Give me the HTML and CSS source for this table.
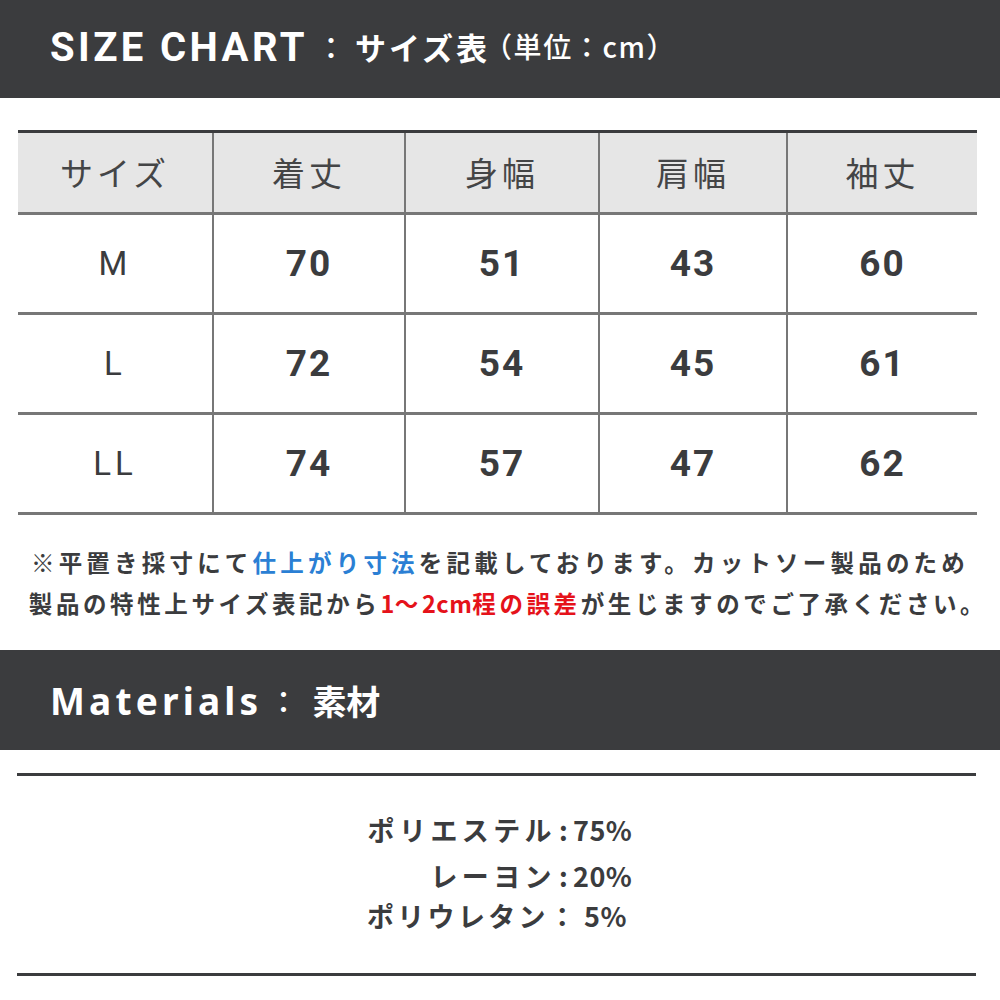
FILE: index.html
```html
<!DOCTYPE html>
<html lang="ja">
<head>
<meta charset="utf-8">
<title>SIZE CHART</title>
<link rel="stylesheet" href="styles.css">
</head>
<body>
<header class="bar bar-size">
  <h1 class="bar-title"><span class="en en-size">SIZE CHART</span><span class="colon">：</span><span class="jp">サイズ表</span><span class="unit">（単位：cm）</span></h1>
</header>

<section class="chart">
  <table class="size-table">
    <colgroup>
      <col class="c1"><col class="c2"><col class="c3"><col class="c4"><col class="c5">
    </colgroup>
    <thead>
      <tr><th>サイズ</th><th>着丈</th><th>身幅</th><th>肩幅</th><th>袖丈</th></tr>
    </thead>
    <tbody>
      <tr><td class="size">M</td><td>70</td><td>51</td><td>43</td><td>60</td></tr>
      <tr><td class="size">L</td><td>72</td><td>54</td><td>45</td><td>61</td></tr>
      <tr><td class="size">LL</td><td>74</td><td>57</td><td>47</td><td>62</td></tr>
    </tbody>
  </table>
  <div class="note">
    <p>※平置き採寸にて<span class="blue">仕上がり寸法</span>を記載しております。カットソー製品のため</p>
    <p class="l2">製品の特性上サイズ表記から<span class="red"><span class="half">1</span>〜<span class="half">2cm</span>程の誤差</span>が生じますのでご了承ください。</p>
  </div>
</section>

<header class="bar bar-mat">
  <h2 class="bar-title"><span class="en en-mat">Materials</span><span class="colon">：</span><span class="jp">素材</span></h2>
</header>

<section class="materials">
  <div class="mat-list">
    <span class="name r1">ポリエステル</span><span class="sep r1">:</span><span class="val r1">75%</span>
    <span class="name r2">レーヨン</span><span class="sep r2">:</span><span class="val r2">20%</span>
    <span class="whole r3">ポリウレタン：<span class="val3">5%</span></span>
  </div>
</section>
</body>
</html>
```

FILE: styles.css
```css
html, body {
  margin: 0;
  padding: 0;
  background: #ffffff;
}
body {
  width: 1000px;
  font-family: "Noto Sans CJK JP", "Noto Sans", sans-serif;
  color: #3b3c3e;
}
p, h1, h2 { margin: 0; }

.bar {
  background: #3b3c3e;
  color: #ffffff;
  display: flex;
  align-items: center;
  padding-left: 50px;
}
.bar-size { height: 98px; padding-bottom: 6px; box-sizing: border-box; }
.bar-mat { height: 100px; }

.bar-title {
  display: flex;
  align-items: center;
  font-weight: 700;
  white-space: nowrap;
}
.en-size {
  font-family: "Roboto", "Liberation Sans", sans-serif;
  font-size: 40px;
  font-weight: 700;
  letter-spacing: 3.4px;
  position: relative;
  top: 1px;
}
.en-mat {
  font-family: "Noto Sans", "Liberation Sans", sans-serif;
  font-size: 37px;
  font-weight: 700;
  letter-spacing: 4.2px;
}
.bar-size .colon {
  font-size: 30px;
  margin-left: 8px;
  margin-right: 9px;
  font-weight: 500;
}
.bar-mat .colon {
  font-size: 30px;
  margin-left: 6px;
  margin-right: 14px;
  font-weight: 500;
}
.bar-size .jp {
  font-size: 31px;
  font-weight: 700;
  letter-spacing: 3px;
}
.bar-mat .jp {
  font-size: 34px;
  font-weight: 700;
}
.unit {
  font-size: 28px;
  font-weight: 500;
  letter-spacing: 1.6px;
  margin-left: -6px;
}

.chart {
  padding-top: 32px;
}
.size-table {
  margin-left: 18px;
  width: 959px;
  border-collapse: collapse;
  table-layout: fixed;
}
.c1 { width: 195px; }
.c2 { width: 192px; }
.c3 { width: 194px; }
.c4 { width: 188px; }
.c5 { width: auto; }
.size-table thead tr {
  border-top: 3px solid #3b3c3e;
}
.size-table th {
  background: #e6e6e6;
  height: 79px;
  padding: 0;
  font-size: 33px;
  font-weight: 400;
  letter-spacing: 4px;
  line-height: 1;
  color: #444546;
  border-bottom: 3px solid #777777;
}
.size-table th,
.size-table td {
  border-left: 2px solid #777777;
  text-align: center;
}
.size-table th:first-child,
.size-table td:first-child {
  border-left: none;
}
.size-table td {
  height: 97px;
  padding: 0;
  line-height: 1;
  border-bottom: 3px solid #777777;
  font-family: "Roboto", "Liberation Sans", sans-serif;
  font-size: 37px;
  font-weight: 700;
  letter-spacing: 2px;
  color: #3b3c3e;
}
.size-table td.size {
  font-weight: 400;
  font-size: 33px;
  letter-spacing: 4px;
  vertical-align: middle;
}

.note {
  padding-top: 27px;
  text-align: center;
  font-size: 23.5px;
  font-weight: 700;
  letter-spacing: 4.2px;
  line-height: 41px;
  color: #3b3c3e;
}
.note p { white-space: nowrap; }
.note p.l2 { padding-left: 16px; letter-spacing: 3.6px; }
.half { letter-spacing: 0.5px; }
.blue { color: #2b7fd4; }
.red { color: #e5121a; }

.bar-mat { margin-top: 26px; }

.materials {
  margin: 23px 24px 0 17px;
  border-top: 3px solid #3b3c3e;
  border-bottom: 3px solid #3b3c3e;
  height: 197px;
}
.mat-list {
  margin-left: 350px;
  padding-top: 31px;
  display: grid;
  grid-template-columns: 185px 21px 70px;
  grid-template-rows: 44px 48px 32px;
  align-items: center;
  font-size: 27px;
  font-weight: 700;
  color: #3b3c3e;
  white-space: nowrap;
}
.name {
  text-align: right;
  letter-spacing: 4.4px;
  margin-right: -4px;
}
.sep {
  text-align: center;
  padding-left: 2px;
}
.val {
  letter-spacing: 0.5px;
}
.r1 { grid-row: 1; }
.r2 { grid-row: 2; }
.whole {
  grid-row: 3;
  grid-column: 1 / 4;
  letter-spacing: 3.3px;
}
.val3 {
  letter-spacing: 0.5px;
  margin-left: 5px;
}
```
